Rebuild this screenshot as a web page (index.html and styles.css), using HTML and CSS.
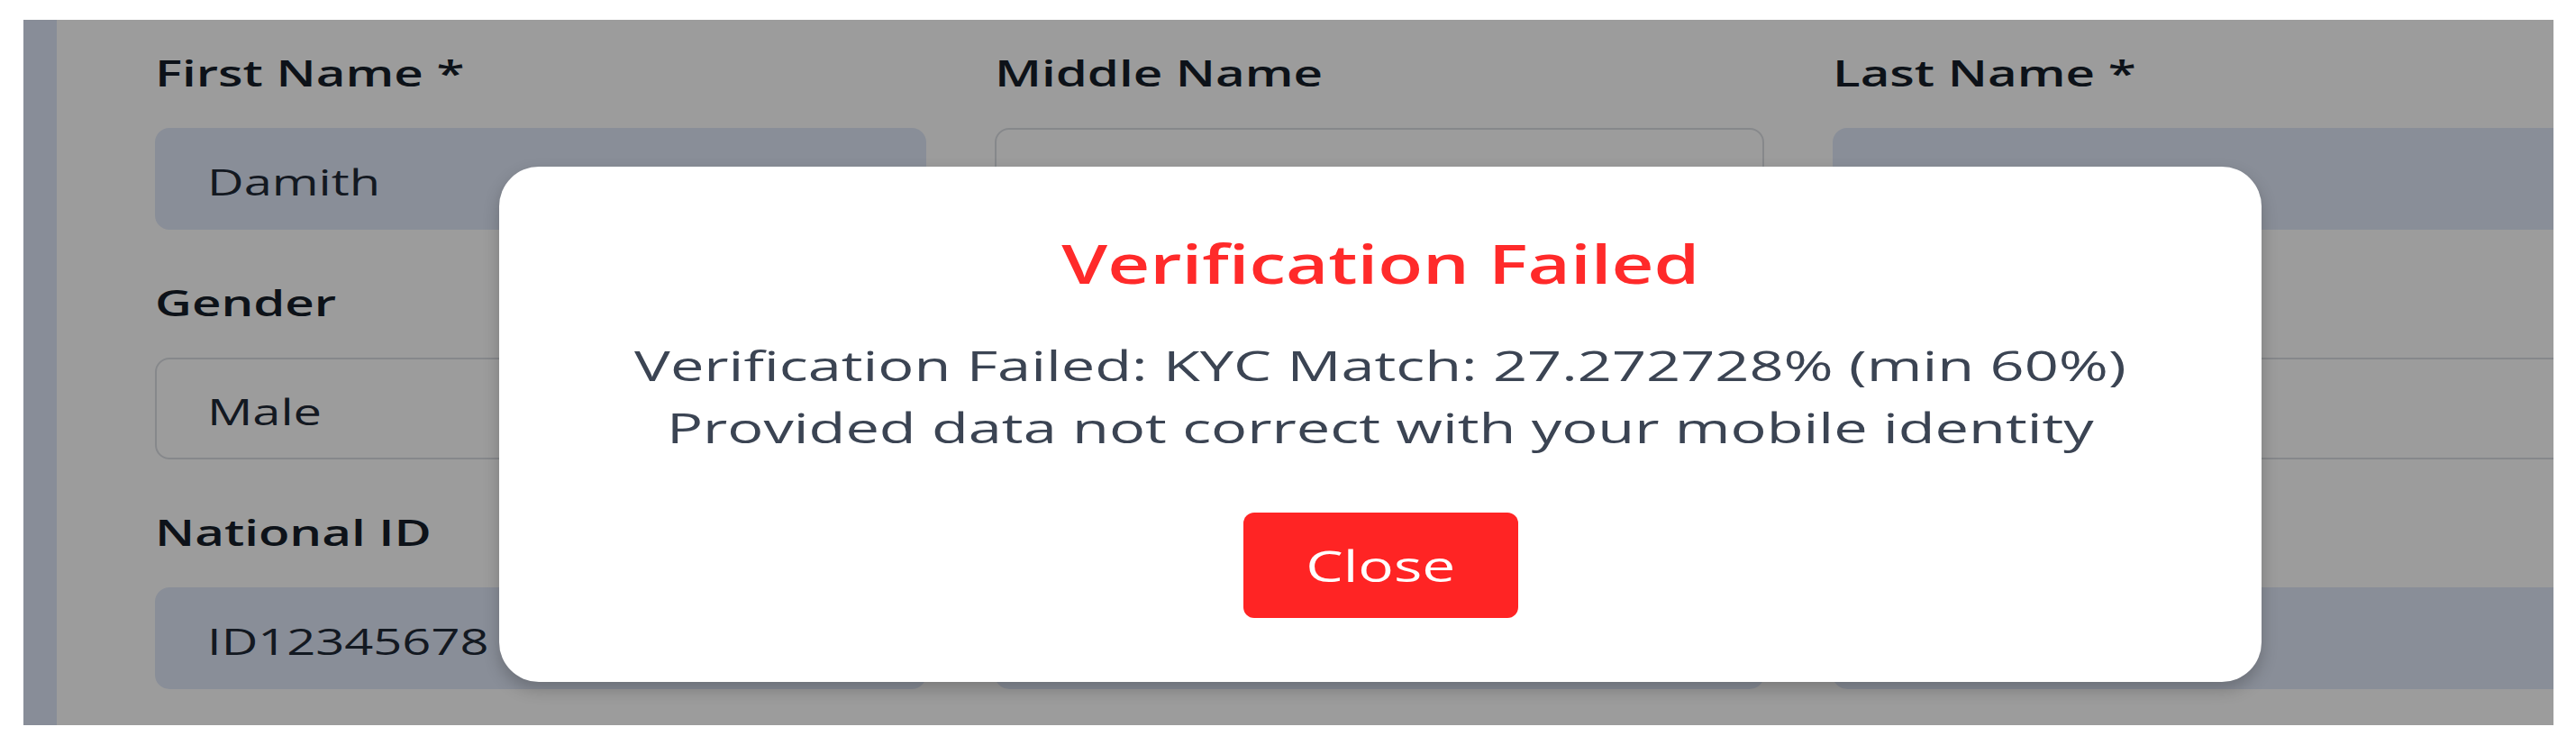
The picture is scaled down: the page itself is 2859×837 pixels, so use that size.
FILE: index.html
```html
<!DOCTYPE html>
<html lang="en">
<head>
<meta charset="utf-8">
<title>Verification Failed</title>
<link rel="stylesheet" href="styles.css">
</head>
<body>
<div class="page">
  <div class="panel">
    <aside class="strip"></aside>
    <form class="form">
      <div class="field">
        <label class="label"><span class="sx sx-label">First Name *</span></label>
        <div class="input filled"><span class="sx">Damith</span></div>
      </div>
      <div class="field">
        <label class="label"><span class="sx sx-label">Middle Name</span></label>
        <div class="input"></div>
      </div>
      <div class="field">
        <label class="label"><span class="sx sx-label">Last Name *</span></label>
        <div class="input filled"></div>
      </div>
      <div class="field">
        <label class="label"><span class="sx sx-label">Gender</span></label>
        <div class="input"><span class="sx">Male</span></div>
      </div>
      <div class="field">
        <label class="label">&nbsp;</label>
        <div class="input"></div>
      </div>
      <div class="field">
        <label class="label">&nbsp;</label>
        <div class="input"></div>
      </div>
      <div class="field">
        <label class="label"><span class="sx sx-label">National ID</span></label>
        <div class="input filled"><span class="sx">ID12345678</span></div>
      </div>
      <div class="field">
        <label class="label">&nbsp;</label>
        <div class="input filled"></div>
      </div>
      <div class="field">
        <label class="label">&nbsp;</label>
        <div class="input filled"></div>
      </div>
    </form>
    <div class="backdrop">
      <div class="modal" role="dialog">
        <h2 class="modal-title"><span class="sx sx-c sx-title">Verification Failed</span></h2>
        <p class="modal-msg"><span class="sx sx-c sx-msg">Verification Failed: KYC Match: 27.272728% (min 60%)<br>Provided data not correct with your mobile identity</span></p>
        <button class="btn-close" type="button"><span class="sx sx-c">Close</span></button>
      </div>
    </div>
  </div>
</div>
</body>
</html>
```

FILE: styles.css
```css
* {
  box-sizing: border-box;
}

html, body {
  margin: 0;
  padding: 0;
  background: #ffffff;
}

body {
  font-family: "Open Sans", "Noto Sans", "DejaVu Sans", sans-serif;
  color: #1f2937;
}

.page {
  padding: 22px 25px 32px 26px;
}

.panel {
  position: relative;
  display: flex;
  height: 783px;
  background: #ffffff;
  overflow: hidden;
}

.strip {
  flex: 0 0 37px;
  background: #dee7f9;
}

.form {
  flex: 1 1 auto;
  min-width: 0;
  padding: 34px 0 0 109px;
  display: grid;
  grid-template-columns: 856px 854px 856px;
  grid-auto-rows: max-content;
  column-gap: 76px;
  row-gap: 56px;
  align-content: start;
}

.field {
  display: flex;
  flex-direction: column;
}

.label {
  display: block;
  font-size: 40px;
  line-height: 50px;
  font-weight: 600;
  color: #161e2a;
  margin-bottom: 36px;
  white-space: nowrap;
}

.input {
  height: 113px;
  border-radius: 16px;
  border: 2px solid #dcdfe4;
  background: #ffffff;
  display: flex;
  align-items: center;
  padding: 5px 0 0 56px;
  font-size: 40px;
  font-weight: 500;
  color: #1f2937;
  white-space: nowrap;
}

.input.filled {
  background: #e1e9f9;
  border-color: #e1e9f9;
}

/* the captured screen is stretched horizontally */
.sx {
  display: inline-block;
  transform: scaleX(1.4);
  transform-origin: 0 50%;
}

.sx-label {
  transform: scaleX(1.41);
}

.sx-c {
  transform-origin: 50% 50%;
}

.sx-title {
  transform: scaleX(1.36);
}

.sx-msg {
  transform: scaleX(1.45);
}

.backdrop {
  position: absolute;
  inset: 0;
  background: rgba(0, 0, 0, 0.39);
  padding: 163px 0 0 528px;
  display: flex;
  align-items: flex-start;
}

.modal {
  width: 1956px;
  background: #ffffff;
  border-radius: 44px;
  padding: 70px 0 71px;
  display: flex;
  flex-direction: column;
  align-items: center;
  text-align: center;
  box-shadow: 0 8px 18px rgba(0, 0, 0, 0.22);
}

.modal-title {
  margin: 0;
  font-size: 60px;
  line-height: 74px;
  font-weight: 600;
  color: #ff2a2a;
  white-space: nowrap;
}

.modal-msg {
  margin: 42px 0 0;
  font-size: 46px;
  line-height: 69px;
  font-weight: 400;
  color: #3b4453;
  white-space: nowrap;
}

.btn-close {
  margin-top: 60px;
  width: 305px;
  height: 117px;
  border: 0;
  border-radius: 12px;
  background: #ff2424;
  color: #ffffff;
  font-family: inherit;
  font-size: 47px;
  font-weight: 500;
  padding: 0;
  display: flex;
  align-items: center;
  justify-content: center;
}
```
